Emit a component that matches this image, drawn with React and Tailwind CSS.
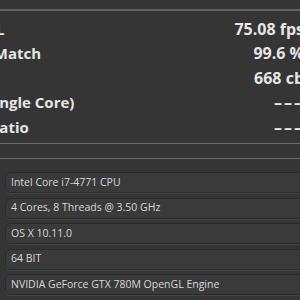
export default function App() {
  const rows = [
    { label: "OpenGL", value: "75.08 fps", ml: "ml-[-55px]" },
    { label: "Ref. Match", value: "99.6 %", ml: "ml-[-39px]" },
    { label: "CPU", value: "668 cb", ml: "ml-[-55px]" },
    { label: "CPU (Single Core)", value: "–––", ml: "ml-[-53px]", dash: true },
    { label: "MP Ratio", value: "–––", ml: "ml-[-38px]", dash: true },
  ];
  const pills = [
    "Intel Core i7-4771 CPU",
    "4 Cores, 8 Threads @ 3.50 GHz",
    "OS X 10.11.0",
    "64 BIT",
    "NVIDIA GeForce GTX 780M OpenGL Engine",
  ];
  return (
    <div className="w-[300px] h-[300px] overflow-hidden bg-[#353535] font-['Open_Sans',sans-serif]">
      <div className="h-[9px]" />
      <div className="h-[2px] bg-[#626262]" />
      <div className="flex flex-col pt-[5.5px] mr-[-4px] text-[#e6e6e6] font-bold">
        {rows.map((r, i) => (
          <div key={i} className="flex items-center justify-between h-[24.5px] whitespace-nowrap">
            <span className={`${r.ml} text-[15px] leading-6`}>{r.label}</span>
            <span className={`text-[16px] leading-6 ${r.dash ? "tracking-[2px]" : ""}`}>{r.value}</span>
          </div>
        ))}
      </div>
      <div className="h-[4px]" />
      <div className="h-px bg-[#6c6c6c]" />
      <div className="h-[14px]" />
      <div className="h-px bg-[#6c6c6c]" />
      <div className="flex flex-col gap-[4.5px] pt-[13px] pl-[5px] mr-[-20px]">
        {pills.map((p, i) => (
          <div
            key={i}
            className="h-[21px] flex items-center pl-[5px] rounded-[6px] border border-[#2a2a2a] bg-[#3a3a3a] shadow-[0_1px_0_#444444] text-[10.5px] text-[#d8d8d8] whitespace-nowrap"
          >
            {p}
          </div>
        ))}
      </div>
    </div>
  );
}
